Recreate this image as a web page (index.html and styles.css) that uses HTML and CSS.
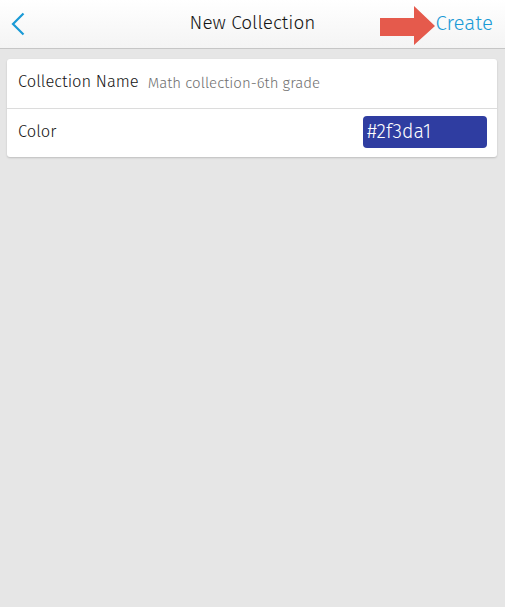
FILE: index.html
```html
<!DOCTYPE html>
<html>
<head>
<meta charset="utf-8">
<link rel="stylesheet" href="styles.css">
</head>
<body>
<header class="nav">
  <button class="back" aria-label="Back">
    <svg width="14" height="24" viewBox="0 0 14 24"><path d="M12.5 1.5 L2 12 L12.5 22.5" fill="none" stroke="#1a9ad6" stroke-width="2.2"/></svg>
  </button>
  <h1 class="title">New Collection</h1>
  <div class="action">
    <svg class="arrow" width="56" height="40" viewBox="0 0 56 40"><polygon points="0,12 34,12 34,0 55,20 34,39 34,30 0,30" fill="#e55a4c"/></svg>
    <span class="create">Create</span>
  </div>
</header>
<main class="content">
  <section class="card">
    <div class="row">
      <span class="label">Collection Name</span>
      <span class="value">Math collection-6th grade</span>
    </div>
    <div class="row">
      <span class="label">Color</span>
      <span class="swatch">#2f3da1</span>
    </div>
  </section>
</main>
</body>
</html>
```
FILE: styles.css
```css
* { box-sizing: border-box; }
html, body { margin: 0; padding: 0; }
body {
  width: 505px;
  height: 607px;
  background: #e6e6e6;
  font-family: "Fira Sans", "Noto Sans", "Open Sans", sans-serif;
  font-weight: 300;
  overflow: hidden;
}
.nav {
  height: 49px;
  display: flex;
  align-items: center;
  position: relative;
  background: linear-gradient(#ffffff, #f4f4f4);
  border-bottom: 1px solid #c6c6c6;
  padding: 0 12px 0 11px;
}
.back {
  border: 0;
  background: none;
  padding: 0;
  width: 14px;
  height: 24px;
  display: flex;
  margin-top: -1px;
}
.title {
  position: absolute;
  left: 0;
  right: 0;
  top: 0;
  margin: 0;
  text-align: center;
  line-height: 46px;
  font-size: 19px;
  font-weight: 300;
  color: #151515;
  pointer-events: none;
}
.action {
  margin-left: auto;
  display: flex;
  align-items: center;
  gap: 0;
  margin-top: -1px;
}
.arrow { margin-top: 5px; }
.create {
  font-size: 20.5px;
  color: #1a9ad6;
  position: relative;
  top: -1px;
}
.content { padding: 10px 8px 0 7px; }
.card {
  background: #fff;
  border-radius: 3px;
  box-shadow: 0 1px 2px rgba(0,0,0,0.18);
}
.row {
  height: 49px;
  display: flex;
  align-items: center;
  padding: 0 10px 0 11px;
}
.row + .row { border-top: 1px solid #dcdcdc; height: 49px; }
.label {
  font-size: 16.5px;
  color: #151515;
  margin-top: -4px;
}
.row + .row .label { margin-top: -3px; }
.value {
  font-size: 15px;
  color: #707070;
  margin-left: 9px;
  margin-top: -1px;
}
.swatch {
  margin-left: auto;
  width: 124px;
  height: 32px;
  background: #2f3da1;
  border-radius: 4px;
  color: #fff;
  font-size: 19.5px;
  line-height: 31px;
  padding-left: 4px;
  margin-top: -2px;
}
```
